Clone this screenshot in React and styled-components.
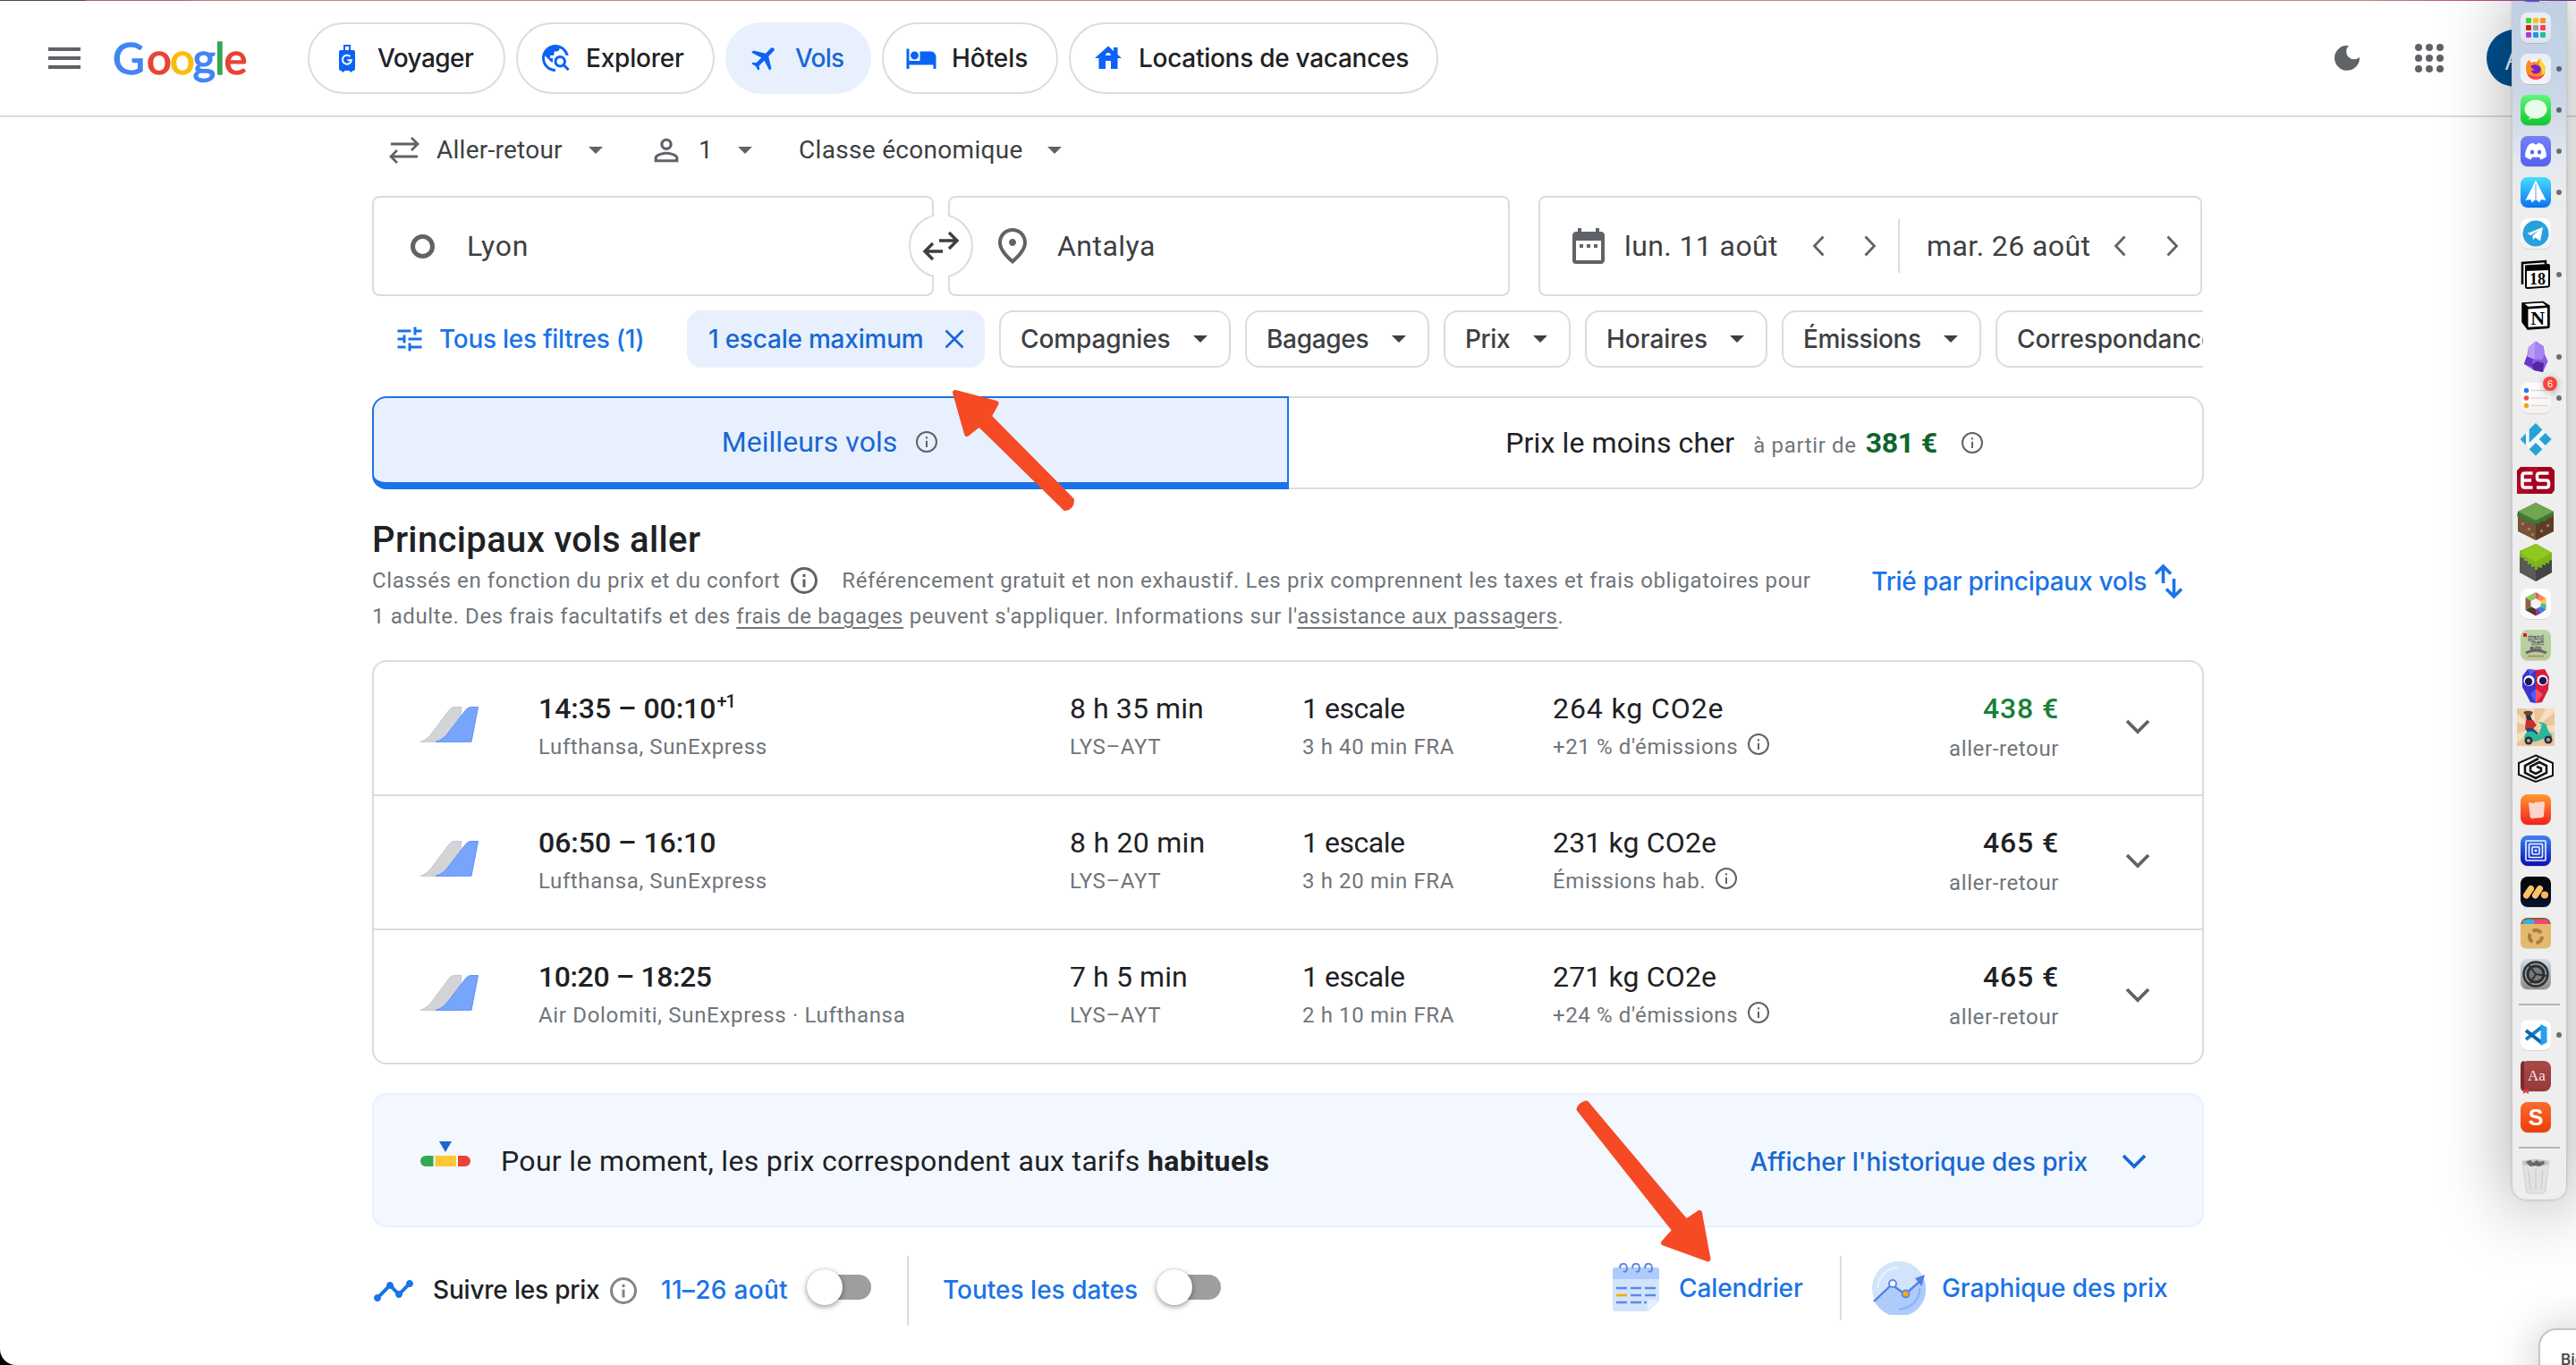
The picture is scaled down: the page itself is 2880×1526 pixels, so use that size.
import React from "react";
import styled, { createGlobalStyle, css } from "styled-components";
import { MdTravelExplore, MdHotel, MdHouse, MdFlight, MdTune, MdDateRange, MdTimeline, MdOutlinePlace, MdPersonOutline } from "react-icons/md";

const c = {
  ink: "#202124", text: "#3c4043", mid: "#5f6368", soft: "#70757a", line: "#dadce0",
  blue: "#1a73e8", deep: "#1967d2", pale: "#e8f0fe", icon: "#0b63f6",
};
const sans = `Roboto, "Liberation Sans", sans-serif`;
const product = `Inter, "Liberation Sans", sans-serif`;

const Global = createGlobalStyle`
  *{box-sizing:border-box}
  html,body{margin:0;background:#000}
  body{font-family:${sans};color:${c.ink}}
  svg{display:block;flex:none}
`;

const Page = styled.div`
  position: relative; width: 2880px; height: 1526px; overflow: hidden;
  background: #fff; border-bottom-left-radius: 18px;
`;
const TopStrip = styled.div`
  position: absolute; inset: 0 0 auto 0; height: 1px;
  background: linear-gradient(90deg, #5c4354 0 95px, #b0608e 97px 210px, #b98274 225px 262px, #bb8b79 275px 2640px, #c05a78 2740px, #a03c8c 2810px, #6d2a9c 2880px);
`;
const Label = styled.span`
  font-family: ${p => (p.$p ? product : sans)};
  font-size: ${p => p.$s || 28}px;
  font-weight: ${p => p.$b || 400};
  letter-spacing: ${p => p.$ls || 0}px;
  color: ${p => p.$c || "inherit"};
  white-space: pre; flex: none;
  ${p => p.$w && css`width: ${p.$w}px;`}
  ${p => p.$ml && css`margin-left: ${p.$ml}px;`}
`;

/* ---------- header ---------- */
const Header = styled.header`
  display: flex; align-items: center; height: 131px; padding: 0 36px 0 54px;
  border-bottom: 2px solid ${c.line};
`;
const Burger = styled.div`
  width: 36px; height: 24px; display: flex; flex-direction: column; justify-content: space-between;
  i { height: 4px; background: ${c.mid}; }
`;
const Logo = styled.div`
  display: flex; width: 150px; margin: 0 68px 2px 36px; line-height: 64px;
  font-family: Lato, sans-serif; font-size: 49px; font-weight: 400;
`;
const LogoLetter = styled.span`
  width: ${p => p.$w}px; flex: none; color: ${p => p.$c}; -webkit-text-stroke: 1.4px ${p => p.$c};
`;
const Nav = styled.nav`display: flex; gap: 12px;`;
const Pill = styled.a`
  display: flex; align-items: center; gap: 16px; height: 80px; width: ${p => p.$w}px; padding-left: 24px;
  border: 2px solid ${p => (p.$on ? c.pale : c.line)}; border-radius: 40px;
  background: ${p => (p.$on ? c.pale : "#fff")}; color: ${p => (p.$on ? c.deep : c.ink)};
  > svg { width: 36px; height: 36px; color: ${c.icon}; }
`;
const HeaderTools = styled.div`margin-left: auto; display: flex; align-items: center;`;
const Dots = styled.div`
  margin: 0 48px 0 62px; display: grid; grid-template-columns: repeat(3, 8px); gap: 4px;
  i { width: 8px; height: 8px; border-radius: 50%; background: ${c.mid}; }
`;
const Avatar = styled.div`
  width: 64px; height: 64px; border-radius: 50%; background: #00508f; color: #fff;
  display: flex; align-items: center; justify-content: center; font-size: 38px; font-weight: 300;
`;

/* ---------- search ---------- */
const Main = styled.main`width: 2048px; margin-left: 416px;`;
const Options = styled.div`display: flex; height: 73px; margin-bottom: 15px; padding-left: 19px; color: ${c.text};`;
const Option = styled.div`display: flex; align-items: center; margin-right: ${p => p.$mr || 0}px;`;
const Caret = styled.i`
  width: 0; height: 0; border: 8px solid transparent; border-bottom: 0; border-top-color: ${p => p.$c || c.mid};
  margin-left: ${p => p.$ml || 0}px; flex: none;
`;
const Search = styled.div`
  position: relative; display: grid; grid-template-columns: 628px 628px 758px; column-gap: 16px; height: 112px; color: ${c.text};
`;
const Field = styled.div`
  display: flex; align-items: center; border: 2px solid ${c.line}; border-radius: 8px;
  padding-left: ${p => p.$pl}px; gap: ${p => p.$gap || 0}px; ${p => p.$ml && css`margin-left: ${p.$ml}px;`}
  color: ${c.text};
`;
const Ring = styled.i`width: 27px; height: 27px; border: 5px solid ${c.mid}; border-radius: 50%;`;
const SwapButton = styled.div`
  position: absolute; left: 600px; top: 20px; width: 72px; height: 72px; border-radius: 50%;
  border: 2px solid ${c.line}; background: #fff; display: flex; align-items: center; justify-content: center;
  &::before { content: ""; position: absolute; left: 26px; top: -4px; width: 16px; height: 76px; background: #fff; }
  svg { position: relative; }
`;
const Stepper = styled.div`display: flex; gap: ${p => p.$gap}px;`;
const Rule = styled.i`width: 2px; height: ${p => p.$h}px; background: ${c.line}; margin: 0 ${p => p.$r}px 0 ${p => p.$l}px; flex: none;`;

const Filters = styled.div`
  display: flex; gap: 16px; margin-top: 16px; height: 64px; width: 2047px; overflow: hidden; color: ${c.text};
`;
const AllFilters = styled.div`
  display: flex; align-items: center; gap: 15px; width: 336px; padding: 0 0 1px 24px; flex: none; color: ${c.blue};
`;
const Chip = styled.div`
  display: flex; align-items: center; justify-content: space-between; flex: none; width: ${p => p.$w}px;
  padding: 0 ${p => (p.$on ? 21 : 24)}px 1px ${p => (p.$on ? 22 : 22)}px; border: 2px solid ${p => (p.$on ? c.pale : c.line)}; border-radius: 16px;
  background: ${p => (p.$on ? c.pale : "#fff")}; color: ${p => (p.$on ? c.deep : c.text)};
`;

/* ---------- tabs ---------- */
const Tabs = styled.div`display: grid; grid-template-columns: 1025px 1023px; height: 104px; margin-top: 32px;`;
const Tab = styled.div`
  display: flex; align-items: center; justify-content: center;
  ${p => p.$on
    ? css`border: 2px solid ${c.blue}; border-bottom-width: 8px; border-radius: 16px 0 0 16px; background: ${c.pale}; color: ${c.deep}; padding: 4px 2px 0 0;`
    : css`border: 2px solid ${c.line}; border-left: 0; border-radius: 0 16px 16px 0; padding-right: 3px;`}
`;
const TabText = styled.div`display: flex; align-items: baseline; margin-right: ${p => p.$mr}px;`;

/* ---------- results ---------- */
const Title = styled.h2`margin: 33px 0 1px; font: 500 40px/48px ${sans}; letter-spacing: .35px;`;
const Intro = styled.div`display: flex; justify-content: space-between; height: 109px; padding-right: 23px;`;
const Legal = styled.div`color: ${c.soft};`;
const LegalLine = styled.div`
  display: flex; align-items: center; height: 40px;
  u { text-decoration-thickness: 2px; text-underline-offset: 4px; }
  svg { margin: 0 27px 0 12px; }
`;
const Sort = styled.div`display: flex; align-items: center; height: 42px; gap: 8px; color: ${c.blue};`;
const List = styled.div`border: 2px solid ${c.line}; border-radius: 16px;`;
const Flight = styled.div`
  display: grid; grid-template-columns: 184px 594px 260px 280px 365px 201px 1fr; height: 150px; padding-top: 32px;
  border-bottom: 2px solid ${c.line};
  &:last-child { border-bottom: 0; height: 148px; }
`;
const Tail = styled.svg`margin: 18px 0 0 50px;`;
const Cell = styled.div`text-align: ${p => (p.$right ? "right" : "left")};`;
const Big = styled.div`
  font-size: 32px; line-height: 40px; font-weight: ${p => (p.$b ? 500 : 400)}; color: ${p => p.$c || c.ink};
  letter-spacing: ${p => p.$ls || 0}px; white-space: pre;
  sup { font-size: 20px; line-height: 0; vertical-align: 12px; letter-spacing: -1px; margin-left: 1px; }
`;
const Small = styled.div`
  display: flex; justify-content: ${p => (p.$right ? "flex-end" : "flex-start")}; align-items: center;
  font-size: 24px; line-height: 40px; height: 40px; margin-top: ${p => (p.$right ? 5 : 3)}px; letter-spacing: ${p => p.$ls || 0.62}px; color: ${c.soft};
  svg { margin: -6px 0 0 11px; }
`;
const Expand = styled.div`padding: 32px 0 0 74px;`;

const Banner = styled.div`
  display: flex; align-items: center; height: 150px; margin-top: 32px; padding: 2px 62px 0 52px;
  background: #f3f8ff; border: 2px solid ${c.pale}; border-radius: 16px;
`;
const GaugeArt = styled.svg`margin-top: -14px;`;
const BannerLink = styled.div`
  margin-left: auto; display: flex; align-items: center; gap: 38px; color: ${c.deep};
  > span { padding-top: 1px; }
`;

const Footer = styled.div`display: flex; justify-content: space-between; height: 142px; padding-right: 40px;`;
const Track = styled.div`
  display: flex; align-items: center; height: 142px;
  > span { padding-bottom: 2px; }
`;
const Tools = styled.div`display: flex; align-items: center; height: 136px; color: ${c.blue};`;
const Toggle = styled.div`
  width: 72px; height: 28px; margin: -8px 0 0 20px; display: flex; align-items: center; border-radius: 14px;
  background: linear-gradient(90deg, transparent 14px, #9e9e9e 14px);
  &::before { content: ""; width: 40px; height: 40px; border-radius: 50%; background: #fff; box-shadow: 0 2px 6px rgba(0,0,0,.4), 0 0 2px rgba(0,0,0,.15); }
`;

/* ---------- desktop overlay ---------- */
const Arrows = styled.svg`position: absolute; left: 0; top: 0; pointer-events: none;`;
const Dock = styled.aside`
  position: absolute; top: -14px; right: 10px; width: 62px; height: 1356px; padding-top: 14px;
  border-radius: 0 0 16px 16px; border: 1px solid #c9c9c9; border-top: 0;
  background: linear-gradient(#c0cfe4 0, #c5d3e6 90px, #d3dce8 150px, #e6eaee 200px, #eee 260px);
  box-shadow: 0 8px 80px rgba(0,0,0,.36), 0 0 3px rgba(0,0,0,.12);
`;
const DockList = styled.div`margin-top: -38px;`;
const Slot = styled.div`
  position: relative; height: 46px; padding-left: 3px;
  ${p => p.$run && css`&::after { content: ""; position: absolute; left: 49px; top: 20px; width: 6px; height: 6px; border-radius: 50%; background: ${p.$run === 2 ? "#5b6573" : "#6e6e6e"}; }`}
`;
const DockBadge = styled.i`
  position: absolute; left: 34px; top: -1px; width: 16px; height: 16px; border-radius: 50%; background: #fc443c; color: #fff;
  font: 10px/16px ${product}; text-align: center; box-shadow: 0 2px 10px rgba(0,0,0,.3);
`;
const DockRule = styled.div`height: ${p => p.$h}px; padding: 10px 7px 0; &::before { content: ""; display: block; height: 2px; background: #b5b5b5; }`;
const Popup = styled.div`
  position: absolute; left: 2838px; top: 1485px; width: 80px; height: 80px; padding: 18px 0 0 23px; border-radius: 20px;
  border: 2px solid #c6c6c6; background: #fff; box-shadow: 0 0 50px rgba(0,0,0,.22); color: #4a4a4a; font: 600 17px/30px ${product};
`;

/* ---------- icons ---------- */
const Info = ({ s = 24, w = 2, color = c.mid }) => (
  <svg width={s} height={s} viewBox={`0 0 ${s} ${s}`}>
    <circle cx={s / 2} cy={s / 2} r={s / 2 - w / 2} fill="none" stroke={color} strokeWidth={w} />
    <rect x={s / 2 - w / 2} y={s * 0.45} width={w} height={s * 0.3} fill={color} />
    <rect x={s / 2 - w / 2} y={s * 0.26} width={w} height={w * 1.1} fill={color} />
  </svg>
);
const Chevron = ({ dir }) => (
  <svg width="14" height="24" viewBox="0 0 14 24" fill="none" stroke={c.mid} strokeWidth="2.8">
    <path d={dir === "l" ? "M12.5 1.5 2.5 12l10 10.5" : "M1.5 1.5 11.5 12l-10 10.5"} />
  </svg>
);
const Down = ({ color = c.mid }) => (
  <svg width="28" height="17" viewBox="0 0 28 17" fill="none" stroke={color} strokeWidth="3.8"><path d="m2 2 12 12L26 2" /></svg>
);
const Luggage = () => (
  <svg viewBox="0 0 36 36">
    <path fill="currentColor" d="M14 3h8v6h3q2 0 2 2v19q0 2-2 2h-.6l-1 1.5h-1.8l-1-1.5h-5.200l-1 1.500h-1.800l-1-1.500H11q-2 0-2-2V11q0-2 2-2h3zM16 5v4h4V5z" />
    <path d="M21.500 16.200a5 5 0 1 0 1.400 4h-4.400" fill="none" stroke="#fff" strokeWidth="1.900" />
  </svg>
);
const RoundTrip = () => (
  <svg width="34" height="30" viewBox="0 0 34 30" fill="none" stroke={c.mid} strokeWidth="2.8">
    <path d="M2 8h30M25 1l7 7-7 7M32 22H2M9 15l-7 7 7 7" />
  </svg>
);
const Swap = () => (
  <svg width="42" height="34" viewBox="0 0 42 34" fill="none" stroke={c.text} strokeWidth="3.4">
    <path d="M19 11h20M30 2l9 9-9 9M23 23H3M12 14l-9 9 9 9" />
  </svg>
);
const Moon = () => (
  <svg width="28" height="28" viewBox="0 0 28 28"><path d="M16 0A14 14 0 1 0 28 13 8.600 8.600 0 0 1 16 0z" fill={c.mid} /></svg>
);
const Cross = () => (
  <svg width="22" height="22" viewBox="0 0 22 22" stroke={c.deep} strokeWidth="2.600"><path d="m1.500 1.500 19 19M20.500 1.500l-19 19" /></svg>
);
const SortIcon = () => (
  <svg width="33" height="40" viewBox="0 0 33 40" fill="none" stroke={c.blue} strokeWidth="3.600">
    <path d="M10.500 22V3M2 11.500 10.500 3 19 11.500M22.500 17v20M14 28.500l8.500 8.500 8.500-8.500" />
  </svg>
);
const Gauge = () => (
  <GaugeArt width="56" height="30" viewBox="0 0 56 30">
    <path d="M21 0h14l-7 12z" fill={c.deep} />
    <path d="M6 16h8.500v12H6a6 6 0 0 1 0-12z" fill="#34a853" />
    <path d="M16.500 16H40v12H16.500z" fill="#fcc934" />
    <path d="M42 16h8a6 6 0 0 1 0 12h-8z" fill="#ea4335" />
  </GaugeArt>
);
const CalendarArt = () => (
  <svg width="52" height="56" viewBox="0 0 52 56">
    <path d="M0 8q0-3 3-3h46q3 0 3 3v34L40 54H3q-3 0-3-3z" fill="#d2e3fc" />
    <path d="M0 8q0-3 3-3h46q3 0 3 3v10H0z" fill="#aecbfa" />
    <path d="M39 54V44q0-3 3-3h10z" fill="#e8f0fe" />
    <g fill="none" stroke="#5c88ea" strokeWidth="2">
      <path d="M8 6c0-7 8-7 8-.5S12 9 12 9M22 6c0-7 8-7 8-.5S26 9 26 9M36 6c0-7 8-7 8-.5S40 9 40 9" />
      <path d="M4 28h12M20 28h12M36 28h12M20 36h12M36 36h12M4 44h12M20 44h12M35 44h3" strokeWidth="2.400" />
    </g>
    <path d="M4 36h12" stroke="#f9ab00" strokeWidth="2.600" />
  </svg>
);
const GraphArt = () => (
  <svg width="60" height="60" viewBox="0 0 60 60">
    <circle cx="30" cy="30" r="30" fill="#d2e3fc" />
    <path d="M2 43 22 26l14 12L58 20a30 30 0 0 1-56 23z" fill="#aecbfa" />
    <path d="M6.500 30A23.500 23.500 0 0 1 30 7" fill="none" stroke="#e8f0fe" strokeWidth="2.400" />
    <path d="M53.500 30A23.500 23.500 0 0 1 30 53.500" fill="none" stroke="#8ab4f8" strokeWidth="2.400" />
    <path d="M2 45 22 26l15 11 18-16" fill="none" stroke="#4f80e8" strokeWidth="2.400" />
    <path d="m59 15-3.500 13L48 19z" fill="#4f80e8" />
    <circle cx="23" cy="25" r="4" fill="#fff" stroke="#5c88ea" strokeWidth="2" />
    <circle cx="37.500" cy="36.500" r="4" fill="#f9ab00" stroke="#5c88ea" strokeWidth="2" />
  </svg>
);
const Tails = () => (
  <Tail width="67" height="40" viewBox="0 0 67 40" strokeWidth="1">
    <path d="M2 39.300Q10 37 16 28L34 4q2.500-3.500 6-3.500h8L44 39.300z" fill="#d2d4d8" stroke="#c3c6ca" />
    <path d="M19 39.300Q28 37 34 28L52.500 4q2.500-3.500 6-3.500h8l-7.500 38.800z" fill="#78a5fc" stroke="#5f91f5" />
  </Tail>
);

/* ---------- dock icons, each on a 46 × 46 canvas ---------- */
const Tile = ({ id, a, b, children }) => (
  <svg width="46" height="46" viewBox="0 0 46 46">
    <defs><linearGradient id={id} x1="0" y1="0" x2="0" y2="1"><stop stopColor={a} /><stop offset="1" stopColor={b} /></linearGradient></defs>
    <rect x="6" y="6.500" width="34" height="34.500" rx="8" fill="#000" opacity=".1" />
    <rect x="6" y="6" width="34" height="34" rx="8" fill={`url(#${id})`} />
    {children}
  </svg>
);
const Bare = ({ children }) => <svg width="46" height="46" viewBox="0 0 46 46">{children}</svg>;
const padColors = ["#43d232", "#fdbf12", "#f7921e", "#d3221c", "#9a9fa3", "#fc3d5e", "#a341d6", "#1f93f0", "#21bf91"];

const dockIcons = [
  [<Tile id="d0" a="#2a9df4" b="#1b6ff0"><path d="M23 30h14v10H27z" fill="#dfe7f0" /></Tile>],
  [<Tile id="d1" a="#e9eef6" b="#dfe4ec">{padColors.map((f, i) => <rect key={f} x={12 + (i % 3) * 8} y={12 + Math.floor(i / 3) * 8} width="6" height="6" rx="1.200" fill={f} />)}</Tile>],
  [<Tile id="d2" a="#e9eef6" b="#f1f3f8">
    <circle cx="23" cy="24" r="12" fill="#fff" />
    <path d="M12.500 18q1-4 3-5l2.500 3q3-1.500 6-.5 1.500-3 4-4 1 3 3.500 5.500 4 5 1.800 10.500A10.800 10.800 0 0 1 12.300 26q-1-4 .2-8z" fill="#fd8b22" />
    <path d="M28 11.500q1 3 3.500 5.500 4 5 1.800 10.500-1.500 4-5 5.500 3-5 .5-10-3.500-5-.8-11.500z" fill="#ffd93a" />
    <path d="M13 28a10.800 10.800 0 0 0 20.500-1q-4 5-10 4.500-7-.5-10.500-3.500z" fill="#fb3f5d" />
    <path d="M17 20q4-3 8-1 5 1.500 3.500 6-2 4-6.500 3.500-4-1-4-4 2 .5 4-.5-2.500-.5-5-4z" fill="#7a22c8" />
  </Tile>, 2],
  [<Tile id="d3" a="#5ff777" b="#10c62e">
    <ellipse cx="23" cy="22" rx="12.500" ry="10.500" fill="#eafbe9" />
    <path d="M17 29q0 3-3.500 4.500 4.500 0 7-2.500z" fill="#d9f0d8" />
  </Tile>, 2],
  [<Tile id="d4" a="#7680f8" b="#5561f2">
    <path d="M15.500 15.500q3-1.500 5-1.800l.8 1.600h3.400l.8-1.600q2 .3 5 1.800Q35 21.500 35 29q-3 2.800-6.500 3.500l-1.500-2.700h-8l-1.500 2.700Q14 31.800 11 29q0-7.500 4.500-13.500z" fill="#fff" />
    <ellipse cx="19" cy="24" rx="2.200" ry="2.500" fill="#5d68f4" /><ellipse cx="27" cy="24" rx="2.200" ry="2.500" fill="#5d68f4" />
  </Tile>, 1],
  [<Tile id="d5" a="#46dffc" b="#0a72f4">
    <path d="M23 9.500 34.500 32l-5.500-1-2 3.500-3-3h-2l-3 3-2-3.500-5.500 1z" fill="#fff" /><path d="M23 14v17" stroke="#4aa5e8" strokeWidth="1" />
  </Tile>, 1],
  [<Tile id="d6" a="#fff" b="#f1f1f1">
    <circle cx="23" cy="23" r="14.500" fill="#27a1de" />
    <path d="m13.500 23 17.500-7-3 15.500-5.500-4-2.500 2.500-.5-4.500 7-6-9 5.500z" fill="#fff" />
  </Tile>],
  [<Bare>
    <path d="M8 34V10l26-2v3" fill="none" stroke="#000" strokeWidth="2.500" />
    <path d="M12 13.500 37 12q1 0 1 1v22q0 1.500-1.500 1.600L14 38q-2 0-2-1.500z" fill="#fff" stroke="#000" strokeWidth="2" />
    <path d="m12 13 26-1.500V18l-26 1z" fill="#000" />
    <text x="25" y="34" textAnchor="middle" fontFamily="Liberation Serif, serif" fontWeight="700" fontSize="18">18</text>
  </Bare>, 1],
  [<Bare>
    <path d="m8 9 23-1.500L38 12v23q0 1.500-1.500 1.600L14 38l-6-8z" fill="#000" stroke="#000" strokeWidth="1.500" />
    <path d="M10.500 9.800 30.500 8.600l4 3-20 1.200z" fill="#fff" /><path d="M14.500 15.500 36 14v20.500l-21.500 1.300z" fill="#fff" />
    <text x="25.300" y="32.500" textAnchor="middle" fontFamily="Liberation Serif, serif" fontWeight="700" fontSize="22">N</text>
  </Bare>],
  [<Bare>
    <path d="m15 12 8-6.500 8.500 5.500 1.500 9 3.500 8-5.500 12-10-2-11-7 3-8z" fill="#8a5ce6" />
    <path d="m15 12 8-6.500-1 20-8-2.500z" fill="#b79cf4" /><path d="m23 5.500 8.500 5.500 1.500 9-3 6-8-.5z" fill="#a583f0" />
    <path d="m13 22 7 4-2 8-8-3z" fill="#6a35cc" /><path d="m18 32 6-4 8 2-1 10-10-2z" fill="#5426a6" />
  </Bare>, 1],
  [<Tile id="d10" a="#fff" b="#f4f2ee">
    {["#1c7df2", "#f24e45", "#f6a11c"].map((f, i) => <g key={f}><circle cx="12.500" cy={14.500 + i * 8.500} r="2.700" fill={f} /><path d={`M18 ${14.500 + i * 8.500}h18`} stroke="#d6d3cf" strokeWidth="1.200" /></g>)}
  </Tile>, 1, "6"],
  [<Bare>
    <path d="M23 4 42 23 23 42 4 23z" fill="#f7f7f7" stroke="#ddd" strokeWidth=".6" />
    <path d="m23 5 7.500 7.500L15.700 27V12zM5.500 23 12 16.500v13zM33.700 16l7 7-7 7-7-7zM23 27l7.300 7.300L23 41.500l-7.300-7.200z" fill="#27a3d8" />
  </Bare>],
  [<Bare>
    <path d="M6 8h34l4 4v22l-3 4H2V12z" fill="#a3001e" /><path d="M2 38V22L16 8h10L14 38z" fill="#c21232" opacity=".5" />
    <path d="M19.500 15H10.500q-2.500 0-2.500 3v10q0 3 2.500 3h9M8 23h10M37.500 15H27q-2.500 0-2.500 3v2q0 3 2.500 3h8q2.500 0 2.500 3v2q0 3-2.500 3H24" fill="none" stroke="#fff" strokeWidth="3.600" />
  </Bare>],
  [<Bare>
    <path d="m23 2 20 10v22L23 44 3 34V12z" fill="#7a5236" /><path d="m23 22 20-10v22L23 44z" fill="#5d3d27" />
    <path d="m23 2 20 10-20 10L3 12z" fill="#6fa650" /><path d="m3 12 20 10 20-10v4l-4 3-2 0-4 4-3-1-4 4-3-1-3 2-4-4-3 1-4-4-3 0-4-3z" fill="#3c7a35" />
    <path d="M7 24h3v3H7zM14 30h3v3h-3zM28 32h3v3h-3zM35 26h3v3h-3zM18 36h3v3h-3z" fill="#a07a58" />
  </Bare>],
  [<Bare>
    <path d="m23 2 18 10v22L23 44 5 34V12z" fill="#5a5a5a" /><path d="m23 22 18-10v22L23 44z" fill="#444" />
    <path d="m23 2 18 10v8l-3 1v3l-4-1v3l-4-1v4l-5-1v3h-3v-4l-4 1v-4l-4 1v-4l-4 0v-3l-5-1v-7z" fill="#7fb51c" /><path d="m23 2 18 10-18 10L5 12z" fill="#8fc81f" />
  </Bare>],
  [<Tile id="d15" a="#fff" b="#fafafa">
    <path d="M23 10v13L11.500 16z" fill="#97c45c" /><path d="m23 10 5 3-5 10z" fill="#f0566a" /><path d="m28 13 6.500 4L23 23z" fill="#f78a3d" />
    <path d="M34.500 17v6.500H23z" fill="#f4c94b" /><path d="M34.500 23v6.500L23 23z" fill="#4fb89b" /><path d="m34.500 29.500-5.500 4L23 23z" fill="#3c82d6" />
    <path d="m29 33.500-6 3V23z" fill="#8a3f9e" /><path d="M23 36.500 11.500 30 23 23z" fill="#4c3a2c" /><path d="M11.500 16v14L23 23z" fill="#8a6446" />
    <path d="m23 17 5.500 3v6L23 29l-5.500-3v-6z" fill="#f4f4f4" />
  </Tile>],
  [<Tile id="d16" a="#bcd5a4" b="#b4cb9c">
    <path d="M9 10h4v4H9z" fill="#d3232b" />
    <text x="23" y="17" textAnchor="middle" fontFamily="Liberation Sans, sans-serif" fontWeight="700" fontSize="6.500" fill="#fff" stroke="#333" strokeWidth=".4">grand</text>
    <text x="25" y="23" textAnchor="middle" fontFamily="Liberation Sans, sans-serif" fontWeight="700" fontSize="6.500" fill="#fff" stroke="#333" strokeWidth=".4">theft</text>
    <text x="23" y="28" textAnchor="middle" fontFamily="Liberation Sans, sans-serif" fontWeight="700" fontSize="6" fill="#fff" stroke="#333" strokeWidth=".4">auto</text>
    <path d="M12 32q11-6 23 0" fill="none" stroke="#666" strokeWidth="3" /><path d="M14 35.500h18" stroke="#b5834d" strokeWidth="1.500" />
  </Tile>],
  [<Bare>
    <path d="m14 4 9 1v37l-6-1L8 24l0-12z" fill="#3b35cf" /><path d="m23 5 10-1 5 9-1 14-7 14-7 1z" fill="#d81e3e" />
    <path d="m14 4 9 1-6 6zM23 42l-6-10 6-6z" fill="#5b5cf0" /><path d="m23 26 8 6-8 10z" fill="#f0506a" />
    <circle cx="15.500" cy="17" r="6" fill="#fff" /><circle cx="30.500" cy="16.500" r="6" fill="#fff" />
    <circle cx="15" cy="18" r="4.200" fill="#1d1760" /><circle cx="31" cy="17" r="4.200" fill="#1d1760" />
  </Bare>],
  [<Bare>
    <rect x="2" y="2" width="42" height="42" fill="#eac69b" /><path d="M23 24 2 8v10zM23 24 12 2h9zM23 24 34 2h10v4zM23 24l21-4v9zM23 24 2 30v10z" fill="#f5dec1" />
    <path d="M9 6q6-3 11 0l-2 4h-6z" fill="#6b4526" /><path d="M12 10h5l2 5-6 1z" fill="#30303a" /><path d="M12 15h8l4 6-6 5-7-2z" fill="#c9302c" />
    <path d="m11 24 9 0 6 6-3 5-8-4z" fill="#274a78" /><path d="M10 34q2-8 10-6l6 4 4-12-4-2 2-1 6 2 4 10q4 2 3 6l-10 1-8 3H12z" fill="#2ab79b" />
    <circle cx="15" cy="38" r="4.500" fill="#2c3036" /><circle cx="37" cy="37" r="4.500" fill="#2c3036" /><circle cx="37" cy="37" r="2" fill="#aaa" /><circle cx="15" cy="38" r="2" fill="#aaa" />
  </Bare>],
  [<Bare>
    <g fill="none" stroke="#141414" strokeWidth="2"><path d="M23 8.500 42 17v14L23 38 4 30V17z" fill="#fff" />
      <path d="m26 12-15 8v8l12 6 12-6v-8l-8-4-10 5v5l6 3 6-3v-3l-5-2" strokeWidth="2.600" /></g>
  </Bare>],
  [<Tile id="d20" a="#fd9a30" b="#f5201b"><path d="m15 15 6 1 1-1 9-1q2 0 2 2l-1 14q-.2 2-2 2l-11 1q-2 0-2.300-2z" fill="#fdd6cb" /></Tile>],
  [<Tile id="d21" a="#3d83f2" b="#0b11b4"><g fill="none" stroke="#f2f6ff" strokeWidth="1.600"><rect x="12" y="12" width="22" height="22" rx="1" /><rect x="15.500" y="15.500" width="15" height="15" rx="1" /><rect x="19" y="19" width="8" height="8" rx="1" /></g><rect x="21.700" y="21.700" width="2.600" height="2.600" fill="#fff" /></Tile>],
  [<Tile id="d22" a="#050505" b="#061030"><g stroke="#fcc468" strokeWidth="7" strokeLinecap="round"><path d="m12.500 27 5-7.500M22.500 27l5-7.500" /></g><circle cx="33" cy="26.500" r="4" fill="#fbb85a" /></Tile>],
  [<Tile id="d23" a="#8d6138" b="#e0b35f"><path d="M9 13V9.500q6-3 12-1l4 5z" fill="#2db4ec" /><path d="M20 13q2-5 10-5t7 5z" fill="#f2457f" /><path d="M6 13h34v21q0 6-6 6H12q-6 0-6-6z" fill="#e3ba6c" /><circle cx="23" cy="27" r="7" fill="none" stroke="#a97d3f" strokeWidth="4" strokeDasharray="10.500 4.100" /></Tile>],
  [<Tile id="d24" a="#cfdde3" b="#8f8c88"><g fill="none" stroke="#2c2f31"><circle cx="23" cy="23" r="13.500" strokeWidth="2.400" fill="#77797b" /><circle cx="23" cy="23" r="9" strokeWidth="3" /><circle cx="23" cy="23" r="11.500" strokeWidth="1" stroke="#a5a7a9" /><path d="m23 23 12 2M23 23l-8-10M23 23l-6 10" strokeWidth="2" /></g></Tile>],
  ["rule", 22],
  [<Tile id="d25" a="#fff" b="#fff"><g fill="none" strokeWidth="4"><path d="M30 14 12 28" stroke="#1480cc" /><path d="M30 32 12 18" stroke="#0a65a9" /></g><path d="m28.500 11 7 3.500v17l-7 3.500z" fill="#26a0f0" /></Tile>, 1],
  [<Tile id="d26" a="#a94a48" b="#96383a"><path d="M6 12q0-6 4-6v34q-4 0-4-6z" fill="#7d2b2e" /><path d="M9 38h6v5l-3-2-3 2z" fill="#e23c3c" /><text x="24" y="28" textAnchor="middle" fontFamily="Liberation Serif, serif" fontSize="17" fill="#f5e6e3">Aa</text></Tile>],
  [<Tile id="d27" a="#fb6a2c" b="#ee3d0a"><text x="23" y="32" textAnchor="middle" fontFamily="Liberation Sans, sans-serif" fontWeight="700" fontSize="25" fill="#fff">S</text></Tile>],
  ["rule", 20],
  [<Bare>
    <path d="M8 6h30l-4.500 34q-.3 2-3 2h-15q-2.700 0-3-2z" fill="#e1e2e3" stroke="#d0d0d0" /><ellipse cx="23" cy="8" rx="14.500" ry="4" fill="#bfc3c4" />
    <path d="m12 7 5-2 3 3 4-3 3 2 5-1 1 3-6 3-5-1-5 1z" fill="#5f6b68" /><path d="m16 8 3 1-2 2zM28 7l3 1-2 2z" fill="#b5663c" /><path d="m15 16 2 22M23 14v24M31 16l-2 22" stroke="#cfd0d1" strokeWidth="1.500" />
  </Bare>],
];

/* ---------- data ---------- */
const nav = [
  { t: "Voyager", w: 221, ls: -0.56, i: <Luggage /> },
  { t: "Explorer", w: 222, ls: -0.21, i: <MdTravelExplore /> },
  { t: "Vols", w: 163, ls: -0.8, i: <MdFlight transform="rotate(45)" />, on: true },
  { t: "Hôtels", w: 197, ls: -0.05, i: <MdHotel /> },
  { t: "Locations de vacances", w: 413, ls: -0.28, i: <MdHouse /> },
];
const chips = [["Compagnies", 259, -0.1], ["Bagages", 206, -0.31], ["Prix", 142, -0.4], ["Horaires", 204, -0.02], ["Émissions", 223, -0.35], ["Correspondances", 310, -0.13]];
const flights = [
  { time: "14:35 – 00:10", plus: "+1", air: "Lufthansa, SunExpress", dur: "8 h 35 min", stop: "3 h 40 min FRA", co: "264 kg CO2e", cl: 0.9, em: "+21 % d'émissions", price: "438 €", good: true, dl: 0.09 },
  { time: "06:50 – 16:10", tl: -0.03, air: "Lufthansa, SunExpress", dur: "8 h 20 min", stop: "3 h 20 min FRA", co: "231 kg CO2e", cl: 0.15, em: "Émissions hab.", price: "465 €", dl: 0.25 },
  { time: "10:20 – 18:25", tl: -0.4, air: "Air Dolomiti, SunExpress · Lufthansa", al: 0.68, dur: "7 h 5 min", stop: "2 h 10 min FRA", co: "271 kg CO2e", cl: 0.15, em: "+24 % d'émissions", price: "465 €", dl: 0.1 },
];
const logo = [["G", 38, "#4285f4"], ["o", 26, "#ea4335"], ["o", 25.5, "#fbbc05"], ["g", 24.5, "#4285f4"], ["l", 10.5, "#34a853"], ["e", 25.5, "#ea4335"]];

export default function App() {
  return (
    <Page>
      <Global />
      <Header>
        <Burger><i /><i /><i /></Burger>
        <Logo>{logo.map(([l, w, f], i) => <LogoLetter key={i} $w={w} $c={f}>{l}</LogoLetter>)}</Logo>
        <Nav>
          {nav.map(n => (
            <Pill key={n.t} $w={n.w} $on={n.on}>
              {n.i}
              <Label $p $b={500} $ls={n.ls}>{n.t}</Label>
            </Pill>
          ))}
        </Nav>
        <HeaderTools>
          <Moon />
          <Dots>{Array.from({ length: 9 }, (_, i) => <i key={i} />)}</Dots>
          <Avatar>A</Avatar>
        </HeaderTools>
      </Header>

      <Main>
        <Options>
          <Option $mr={51}><RoundTrip /><Label $ml={19} $w={142} $ls={0.25}>Aller-retour</Label><Caret $ml={28} /></Option>
          <Option $mr={52}><MdPersonOutline size={40} color={c.mid} /><Label $ml={16} $w={16}>1</Label><Caret $ml={28} /></Option>
          <Option><Label $w={250} $ls={0.31}>Classe économique</Label><Caret $ml={28} /></Option>
        </Options>

        <Search>
          <Field $pl={41} $gap={36}><Ring /><Label $s={32} $ls={0.8}>Lyon</Label></Field>
          <Field $pl={46} $gap={26}><MdOutlinePlace size={48} color={c.mid} /><Label $s={32} $ls={0.48}>Antalya</Label></Field>
          <Field $pl={30} $ml={16}>
            <MdDateRange size={48} color={c.mid} />
            <Label $s={32} $ls={0.4} $w={210} $ml={16}>lun. 11 août</Label>
            <Stepper $gap={44}><Chevron dir="l" /><Chevron dir="r" /></Stepper>
            <Rule $h={60} $l={24} $r={30} />
            <Label $s={32} $ls={0.42} $w={209}>mar. 26 août</Label>
            <Stepper $gap={45}><Chevron dir="l" /><Chevron dir="r" /></Stepper>
          </Field>
          <SwapButton><Swap /></SwapButton>
        </Search>

        <Filters>
          <AllFilters><MdTune size={36} /><Label $p $b={500} $ls={-0.28}>Tous les filtres (1)</Label></AllFilters>
          <Chip $w={333} $on><Label $p $b={500} $ls={-0.22}>1 escale maximum</Label><Cross /></Chip>
          {chips.map(([t, w, ls]) => (
            <Chip key={t} $w={w}><Label $p $b={500} $ls={ls}>{t}</Label><Caret $c={c.text} /></Chip>
          ))}
        </Filters>

        <Tabs>
          <Tab $on><TabText $mr={21}><Label $s={32} $ls={0.05}>Meilleurs vols</Label></TabText><Info /></Tab>
          <Tab>
            <TabText $mr={27}>
              <Label $s={32} $ls={0.13}>Prix le moins cher</Label>
              <Label $s={24} $ls={0.64} $c={c.soft} $ml={21}>à partir de</Label>
              <Label $s={32} $b={700} $ls={-0.26} $c="#0d652d" $ml={10}>381 €</Label>
            </TabText>
            <Info />
          </Tab>
        </Tabs>

        <Title>Principaux vols aller</Title>
        <Intro>
          <Legal>
            <LegalLine>
              <Label $s={24} $ls={0.59}>Classés en fonction du prix et du confort</Label>
              <Info s={30} w={3} />
              <Label $s={24} $ls={0.61}>Référencement gratuit et non exhaustif. Les prix comprennent les taxes et frais obligatoires pour</Label>
            </LegalLine>
            <LegalLine>
              <Label $s={24} $ls={0.61}>1 adulte. Des frais facultatifs et des <u>frais de bagages</u> peuvent s'appliquer. Informations sur l'<u>assistance aux passagers</u>.</Label>
            </LegalLine>
          </Legal>
          <Sort><Label $p $b={500} $ls={-0.27}>Trié par principaux vols</Label><SortIcon /></Sort>
        </Intro>

        <List>
          {flights.map(f => (
            <Flight key={f.time}>
              <Tails />
              <Cell><Big $b $ls={f.tl || -0.03}>{f.time}{f.plus && <sup>{f.plus}</sup>}</Big><Small $ls={f.al}>{f.air}</Small></Cell>
              <Cell><Big $ls={f.dl}>{f.dur}</Big><Small>LYS–AYT</Small></Cell>
              <Cell><Big $ls={-0.48}>1 escale</Big><Small>{f.stop}</Small></Cell>
              <Cell><Big $ls={f.cl}>{f.co}</Big><Small>{f.em}<Info /></Small></Cell>
              <Cell $right><Big $b $ls={0.87} $c={f.good && "#188038"}>{f.price}</Big><Small $right>aller-retour</Small></Cell>
              <Expand><Down /></Expand>
            </Flight>
          ))}
        </List>

        <Banner>
          <Gauge />
          <Label $s={32} $ls={0.33} $ml={34}>Pour le moment, les prix correspondent aux tarifs </Label>
          <Label $s={32} $b={700} $ls={0.45}>habituels</Label>
          <BannerLink><Label $p $b={500} $ls={-0.07}>Afficher l'historique des prix</Label><Down color={c.deep} /></BannerLink>
        </Banner>

        <Footer>
          <Track>
            <MdTimeline size={48} color={c.blue} />
            <Label $p $b={500} $ls={-0.2} $ml={20} $w={198}>Suivre les prix</Label>
            <Info s={30} w={3} color="#80868b" />
            <Label $p $b={500} $ls={0.31} $c={c.blue} $ml={27} $w={143}>11–26 août</Label>
            <Toggle />
            <Rule $h={78} $l={40} $r={38} />
            <Label $p $b={500} $c={c.blue} $w={219}>Toutes les dates</Label>
            <Toggle />
          </Track>
          <Tools>
            <CalendarArt />
            <Label $p $b={500} $ls={-0.09} $ml={22} $w={140}>Calendrier</Label>
            <Rule $h={72} $l={40} $r={34} />
            <GraphArt />
            <Label $p $b={500} $ls={-0.1} $ml={18} $w={253}>Graphique des prix</Label>
          </Tools>
        </Footer>
      </Main>

      <Arrows width="2880" height="1526" viewBox="0 0 2880 1526" fill="#f64a25" stroke="#f64a25" strokeWidth="6" strokeLinejoin="round">
        <path d="M1068 439l45.500 12-8 14.500L1198 559q0 8-7 9L1095 474l-14 11z" />
        <path d="M1765.500 1240q2-5 8-6.500L1885 1366l15-10 9.500 51.500-49.500-18 12.500-14z" />
      </Arrows>

      <Popup>Bie</Popup>
      <Dock>
        <DockList>
          {dockIcons.map(([icon, run, badge], i) =>
            icon === "rule" ? <DockRule key={i} $h={run} /> : <Slot key={i} $run={run}>{icon}{badge && <DockBadge>{badge}</DockBadge>}</Slot>
          )}
        </DockList>
      </Dock>
      <TopStrip />
    </Page>
  );
}
